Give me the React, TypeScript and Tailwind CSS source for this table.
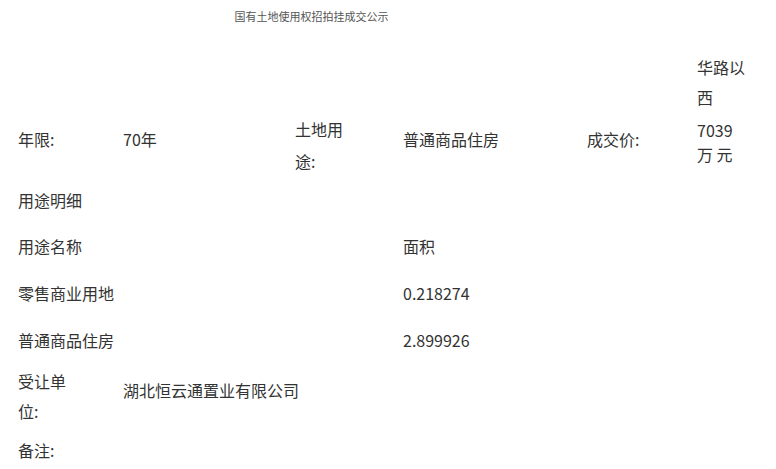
import React from 'react';

const font = { fontFamily: '"Noto Sans CJK SC", "Noto Sans", sans-serif' };

const detailRows = [
  { name: '零售商业用地', area: '0.218274', cls: 'h-[46px] pt-[7px]' },
  { name: '普通商品住房', area: '2.899926', cls: 'h-[46px] pt-[8px]' },
];

export default function App() {
  return (
    <div className="w-[776px] h-[469px] overflow-hidden bg-white text-[#333]" style={font}>
      <div className="flex w-[623px] justify-center text-[11px] leading-[32px] text-[#555]">
        国有土地使用权招拍挂成交公示
      </div>

      <div className="pl-[18px] text-[16px] leading-[32px]">
        {/* tail of the previous row */}
        <div className="flex h-[79px]">
          <div className="w-[679px]" />
          <div className="w-[52px] pt-[20px] leading-[30px]">华路以西</div>
        </div>

        <div className="flex h-[68px]">
          <div className="w-[105px] pt-[12px]">年限:</div>
          <div className="w-[172px] pt-[12px]">70年</div>
          <div className="w-[108px] pt-[2px]">
            <div className="w-[52px]">土地用途:</div>
          </div>
          <div className="w-[184px] pt-[12px]">普通商品住房</div>
          <div className="w-[110px] pt-[12px]">成交价:</div>
          <div className="w-[52px] pt-[7px] leading-[24px]">7039 万 元</div>
        </div>

        <div className="h-[46px] pt-[5px]">用途明细</div>

        <div className="flex h-[45px] pt-[5px]">
          <div className="w-[385px]">用途名称</div>
          <div>面积</div>
        </div>

        {detailRows.map((r) => (
          <div key={r.name} className={`flex ${r.cls}`}>
            <div className="w-[385px]">{r.name}</div>
            <div>{r.area}</div>
          </div>
        ))}

        <div className="flex h-[68px]">
          <div className="w-[105px] pt-[4px] leading-[30px]">
            <div className="w-[52px]">受让单位:</div>
          </div>
          <div className="pt-[12px]">湖北恒云通置业有限公司</div>
        </div>

        <div className="pt-[4px]">备注:</div>
      </div>
    </div>
  );
}
